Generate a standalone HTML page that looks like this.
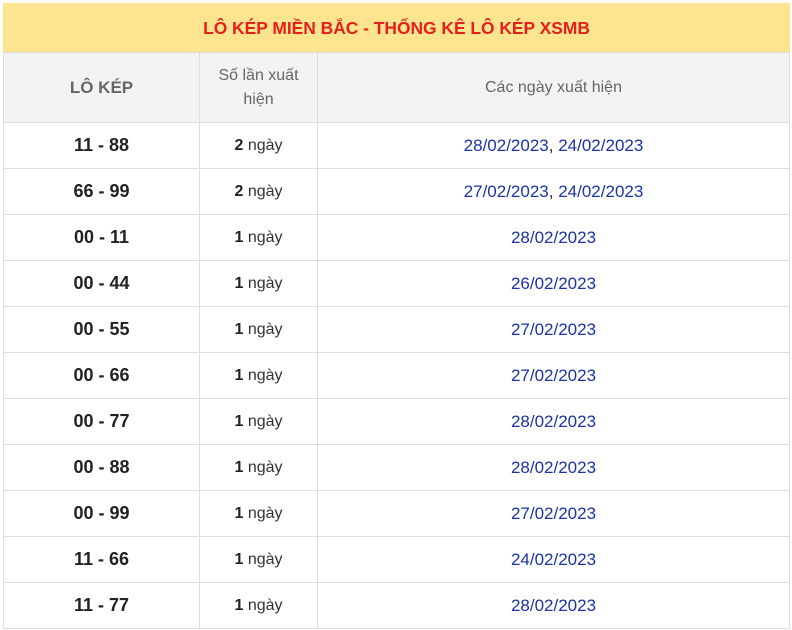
<!DOCTYPE html>
<html><head><meta charset="utf-8"><style>
body{margin:0;background:#fff;font-family:"Liberation Sans",Arial,sans-serif;}
table{position:absolute;left:3px;top:3px;width:787px;border-collapse:collapse;table-layout:fixed;}
td,th{border:1px solid #ddd;text-align:center;padding:0;}
.t{background:#fde58f;color:#e3201b;font-weight:bold;font-size:17.4px;height:48px;border-color:#fde58f;border-bottom-color:#ddd;}
.h th{background:#f3f3f3;height:69px;color:#666;font-weight:normal;font-size:16px;line-height:24px;}
.h th.b{font-weight:bold;font-size:17px;}
tr.r td{height:45px;}
.n{font-weight:bold;font-size:18px;color:#222;}
.c{font-size:16px;color:#333;}
.c b{color:#222;}
.d{font-size:17px;color:#1b33a8;}
.d b{color:#222;font-weight:normal;}
</style></head><body>
<table>
<colgroup><col style="width:196px"><col style="width:118px"><col></colgroup>
<tr><td class="t" colspan="3">LÔ KÉP MIỀN BẮC - THỐNG KÊ LÔ KÉP XSMB</td></tr>
<tr class="h"><th class="b">LÔ KÉP</th><th>Số lần xuất<br>hiện</th><th>Các ngày xuất hiện</th></tr>
<tr class="r"><td class="n">11 - 88</td><td class="c"><b>2</b> ngày</td><td class="d">28/02/2023<b>, </b>24/02/2023</td></tr>
<tr class="r"><td class="n">66 - 99</td><td class="c"><b>2</b> ngày</td><td class="d">27/02/2023<b>, </b>24/02/2023</td></tr>
<tr class="r"><td class="n">00 - 11</td><td class="c"><b>1</b> ngày</td><td class="d">28/02/2023</td></tr>
<tr class="r"><td class="n">00 - 44</td><td class="c"><b>1</b> ngày</td><td class="d">26/02/2023</td></tr>
<tr class="r"><td class="n">00 - 55</td><td class="c"><b>1</b> ngày</td><td class="d">27/02/2023</td></tr>
<tr class="r"><td class="n">00 - 66</td><td class="c"><b>1</b> ngày</td><td class="d">27/02/2023</td></tr>
<tr class="r"><td class="n">00 - 77</td><td class="c"><b>1</b> ngày</td><td class="d">28/02/2023</td></tr>
<tr class="r"><td class="n">00 - 88</td><td class="c"><b>1</b> ngày</td><td class="d">28/02/2023</td></tr>
<tr class="r"><td class="n">00 - 99</td><td class="c"><b>1</b> ngày</td><td class="d">27/02/2023</td></tr>
<tr class="r"><td class="n">11 - 66</td><td class="c"><b>1</b> ngày</td><td class="d">24/02/2023</td></tr>
<tr class="r"><td class="n">11 - 77</td><td class="c"><b>1</b> ngày</td><td class="d">28/02/2023</td></tr>
</table>
</body></html>
